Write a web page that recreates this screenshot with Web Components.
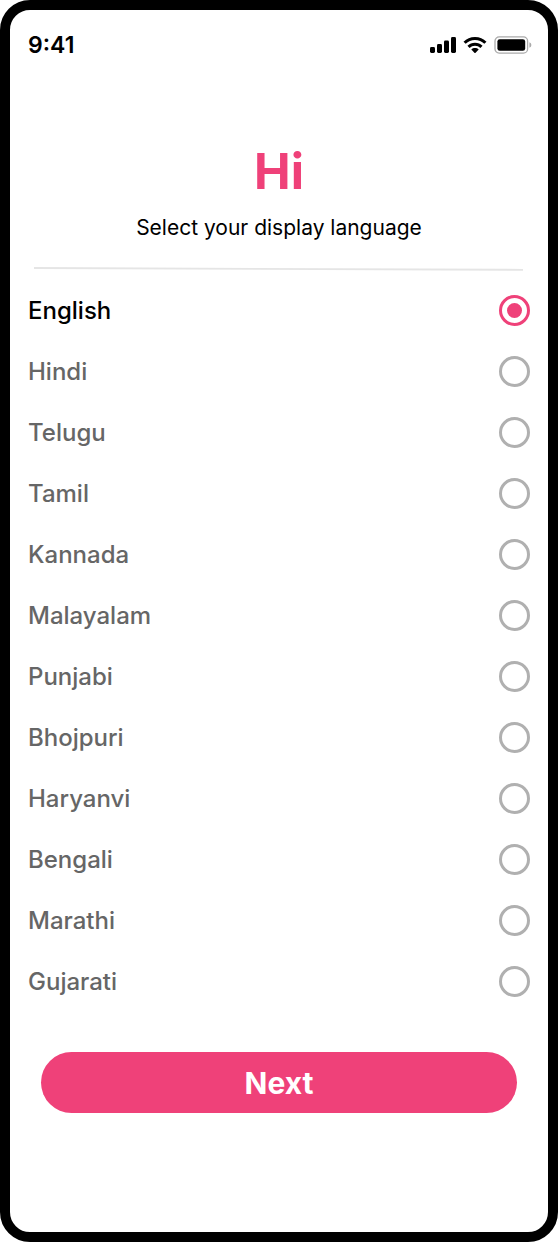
<!DOCTYPE html>
<html lang="en">
<head>
<meta charset="utf-8">
<meta name="viewport" content="width=device-width, initial-scale=1">
<title>Select language</title>
<style>
  html, body { margin: 0; background: #fff; }
  body {
    font-family: Inter, "Liberation Sans", sans-serif;
    color: #000;
    --accent: #ef4179;
    --muted: #666;
    --ring: #b0b0b0;
  }
</style>
</head>
<body>
<phone-frame>
  <status-bar slot="status">9:41</status-bar>
  <page-intro>
    <span slot="title">Hi</span>
    <span slot="subtitle">Select your display language</span>
  </page-intro>
  <language-picker value="English" languages="English,Hindi,Telugu,Tamil,Kannada,Malayalam,Punjabi,Bhojpuri,Haryanvi,Bengali,Marathi,Gujarati"></language-picker>
  <primary-button>Next</primary-button>
</phone-frame>

<script>
  class BaseElement extends HTMLElement {
    constructor() {
      super();
      this.attachShadow({ mode: "open" }).innerHTML = this.constructor.markup;
    }
  }

  customElements.define("phone-frame", class extends BaseElement {
    static markup = `
      <style>
        :host {
          display: flex; flex-direction: column; box-sizing: border-box;
          min-height: 100vh; border: 10px solid #000; border-radius: 30px; background: #fff;
        }
        main { display: flex; flex-direction: column; padding: 62px 18px 40px; }
      </style>
      <slot name="status"></slot>
      <main><slot></slot></main>`;
  });

  customElements.define("status-bar", class extends BaseElement {
    static markup = `
      <style>
        :host {
          display: flex; align-items: center; justify-content: space-between;
          height: 70px; padding: 0 16px 0 18px; font-size: 23px; line-height: 28px; font-weight: 600;
        }
        .icons { display: flex; align-items: center; gap: 7px; }
        svg { display: block; }
      </style>
      <span><slot></slot></span>
      <span class="icons">
        <svg width="26" height="18" viewBox="0 0 26 18" role="img" aria-label="Signal">
          <rect x="0" y="11" width="5" height="6" rx="1.4"/>
          <rect x="7" y="8" width="5" height="9" rx="1.4"/>
          <rect x="14" y="4.5" width="5" height="12.5" rx="1.4"/>
          <rect x="21" y="1" width="5" height="16" rx="1.4"/>
        </svg>
        <svg width="24" height="18" viewBox="0 0 24 18" role="img" aria-label="Wi-Fi">
          <g fill="none" stroke="#000" stroke-width="3">
            <path d="M1.6 6.8C7.2.9 16.8.9 22.4 6.8"/>
            <path d="M5.5 10.9C9.1 7.3 14.9 7.3 18.5 10.9"/>
          </g>
          <path d="M8.3 13.4C10.4 11.5 13.6 11.5 15.7 13.4L12.6 16.7Q12 17.3 11.4 16.7Z"/>
        </svg>
        <svg width="38" height="18" viewBox="0 0 38 18" role="img" aria-label="Battery">
          <rect x="1" y=".9" width="32.6" height="16.2" rx="4.2" fill="none" stroke="#aaa" stroke-width="1.3"/>
          <rect x="3.4" y="3.2" width="27.8" height="11.6" rx="2.4"/>
          <path d="M35.4 6.2Q37.4 7 37.4 9T35.4 11.8Z" fill="#aaa"/>
        </svg>
      </span>`;
  });

  customElements.define("page-intro", class extends BaseElement {
    static markup = `
      <style>
        :host { display: block; text-align: center; padding-bottom: 9px; }
        h1 { margin: 0; font-size: 49px; line-height: 60px; font-weight: 700; color: var(--accent); }
        p { margin: 12px 0 25px; font-size: 21px; line-height: 28px; font-weight: 400; }
        svg { display: block; width: calc(100% - 12px); margin: 0 6px; height: 4px; }
      </style>
      <h1><slot name="title"></slot></h1>
      <p><slot name="subtitle"></slot></p>
      <svg viewBox="0 0 490 4" preserveAspectRatio="none" aria-hidden="true">
        <path d="M0 1L489 2.8" stroke="#e5e5e5" stroke-width="1.8"/>
      </svg>`;
  });

  customElements.define("language-picker", class extends BaseElement {
    static markup = `
      <style>
        :host { display: block; }
        fieldset { display: flex; flex-direction: column; margin: 0; padding: 0; border: 0; min-width: 0; }
        label {
          display: flex; align-items: center; justify-content: space-between; height: 61px;
          font-size: 24px; line-height: 32px; font-weight: 500; color: var(--muted); cursor: pointer;
        }
        label:has(:checked) { color: #000; }
        input {
          appearance: none; display: grid; place-items: center; box-sizing: border-box;
          width: 31px; height: 31px; margin: 0; border: 3px solid var(--ring); border-radius: 50%;
        }
        input:checked { border-color: var(--accent); }
        input:checked::before {
          content: ""; width: 15px; height: 15px; border-radius: 50%; background: var(--accent);
        }
      </style>
      <fieldset aria-label="Display language"></fieldset>`;

    connectedCallback() {
      const group = this.shadowRoot.querySelector("fieldset");
      group.replaceChildren(...this.getAttribute("languages").split(",").map((name) => {
        const label = document.createElement("label");
        const text = document.createElement("span");
        const radio = document.createElement("input");
        text.textContent = name;
        radio.type = "radio";
        radio.name = "language";
        radio.value = radio.id = label.htmlFor = name;
        radio.checked = name === this.getAttribute("value");
        label.append(text, radio);
        return label;
      }));
    }
  });

  customElements.define("primary-button", class extends BaseElement {
    static markup = `
      <style>
        :host { display: block; padding: 40px 13px 0; }
        button {
          display: block; width: 100%; height: 61px; padding: 0; border: 0; border-radius: 31px;
          background: var(--accent); color: #fff; font: 700 30px/36px Inter, "Liberation Sans", sans-serif; cursor: pointer;
        }
      </style>
      <button type="button"><slot></slot></button>`;
  });
</script>
</body>
</html>
